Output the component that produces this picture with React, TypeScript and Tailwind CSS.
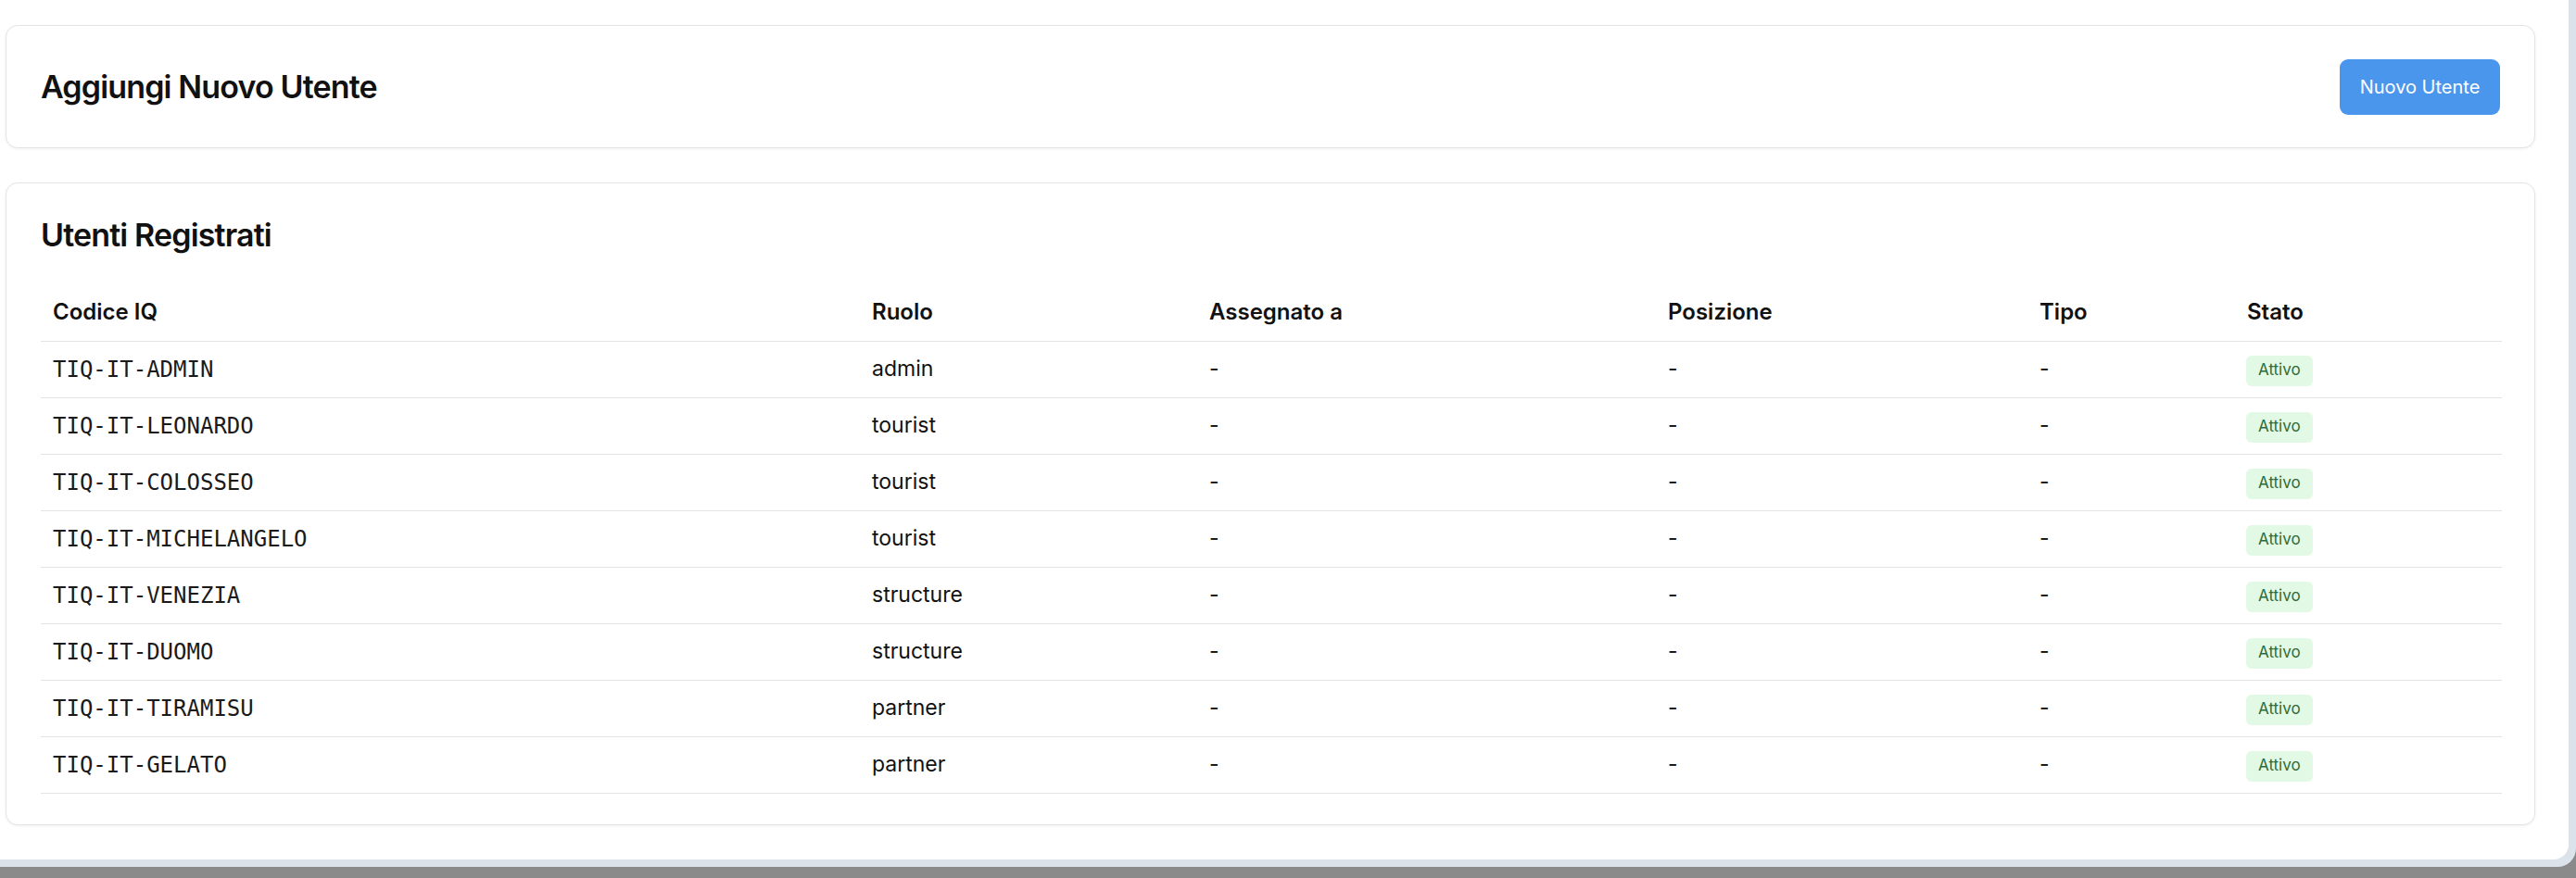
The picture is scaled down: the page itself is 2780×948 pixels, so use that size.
import React from "react"

interface Utente {
  codice: string
  ruolo: string
  assegnato?: string
  posizione?: string
  tipo?: string
}

const utenti: Utente[] = [
  { codice: "TIQ-IT-ADMIN", ruolo: "admin" },
  { codice: "TIQ-IT-LEONARDO", ruolo: "tourist" },
  { codice: "TIQ-IT-COLOSSEO", ruolo: "tourist" },
  { codice: "TIQ-IT-MICHELANGELO", ruolo: "tourist" },
  { codice: "TIQ-IT-VENEZIA", ruolo: "structure" },
  { codice: "TIQ-IT-DUOMO", ruolo: "structure" },
  { codice: "TIQ-IT-TIRAMISU", ruolo: "partner" },
  { codice: "TIQ-IT-GELATO", ruolo: "partner" },
]

const headers = ["Codice IQ", "Ruolo", "Assegnato a", "Posizione", "Tipo", "Stato"]

function Card({ children, className = "" }: { children: React.ReactNode; className?: string }) {
  return (
    <div
      className={`rounded-[13px] border border-[#e4e4e4] bg-white shadow-[0_1px_3px_rgba(0,0,0,0.06)] ${className}`}
    >
      {children}
    </div>
  )
}

export default function App() {
  return (
    <div className="h-[948px] w-[2780px] overflow-hidden bg-gradient-to-b from-[#4e4e4e] via-[#858585] via-[10%] to-[#8a8a8a] font-['Inter',sans-serif] text-[#111111]">
      <div className="h-[936px] w-[2780px] rounded-br-[20px] bg-[#dbe2ea]">
        <div className="flex h-[928px] w-[2772px] flex-col rounded-br-[16px] bg-white pl-[6px] pr-[36px] pt-[27px]">
          <Card className="flex h-[133px] items-center justify-between px-[37px]">
            <h1 className="text-[34px] font-semibold leading-[40px] tracking-tight">
              Aggiungi Nuovo Utente
            </h1>
            <button className="h-[60px] w-[173px] rounded-[9px] bg-[#4a96ec] text-[20px] text-white">
              Nuovo Utente
            </button>
          </Card>

          <Card className="mt-[37px] px-[37px] pb-[33px] pt-[36px]">
            <h2 className="text-[34px] font-semibold leading-[40px] tracking-tight">
              Utenti Registrati
            </h2>
            <table className="mt-[35px] w-[2656px] table-fixed border-collapse text-left">
              <colgroup>
                <col className="w-[884px]" />
                <col className="w-[364px]" />
                <col className="w-[495px]" />
                <col className="w-[401px]" />
                <col className="w-[224px]" />
                <col className="w-[288px]" />
              </colgroup>
              <thead>
                <tr className="h-[59px] border-b border-[#e4e4e4]">
                  {headers.map((h) => (
                    <th key={h} className="px-[13px] pb-[3px] text-[24px] font-semibold">
                      {h}
                    </th>
                  ))}
                </tr>
              </thead>
              <tbody>
                {utenti.map((u) => (
                  <tr key={u.codice} className="h-[61px] border-b border-[#e4e4e4] text-[23px]">
                    <td className="px-[13px] font-['DejaVu_Sans_Mono',monospace] text-[24px] text-[#1a1a1a]">
                      {u.codice}
                    </td>
                    <td className="px-[13px]">{u.ruolo}</td>
                    <td className="px-[13px]">{u.assegnato ?? "-"}</td>
                    <td className="px-[13px]">{u.posizione ?? "-"}</td>
                    <td className="px-[13px]">{u.tipo ?? "-"}</td>
                    <td className="px-[12px]">
                      <span className="inline-flex h-[33px] items-center rounded-[6px] bg-[#e2f9e6] px-[13px] text-[17px] text-[#2f6b3a]">
                        Attivo
                      </span>
                    </td>
                  </tr>
                ))}
              </tbody>
            </table>
          </Card>
        </div>
      </div>
    </div>
  )
}
